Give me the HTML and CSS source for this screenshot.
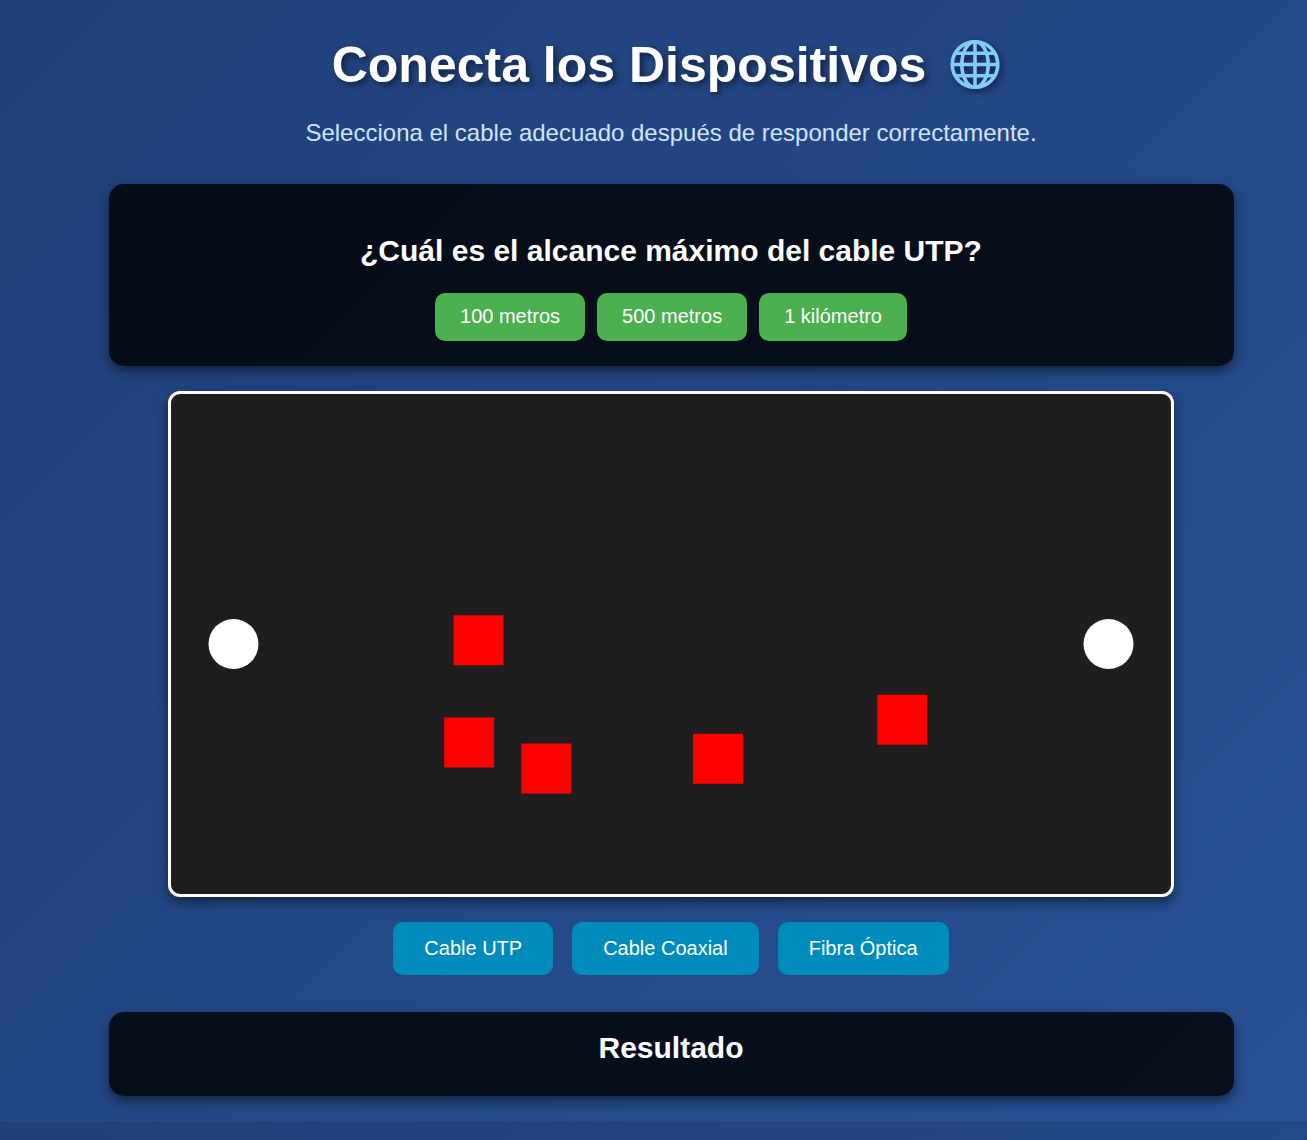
FILE: index.html
```html
<!DOCTYPE html>
<html lang="es">
<head>
<meta charset="utf-8">
<meta name="viewport" content="width=device-width, initial-scale=1">
<title>Conecta los Dispositivos</title>
<link rel="stylesheet" href="styles.css">
</head>
<body>
<main class="page">
  <header class="header">
    <h1 class="title">Conecta los Dispositivos
      <svg class="globe" viewBox="0 0 50 50" aria-hidden="true">
        <g fill="none" stroke="#83cbff" stroke-width="3.6">
          <circle cx="25" cy="24.5" r="22.8"/>
          <ellipse cx="25" cy="24.5" rx="13.2" ry="22.8"/>
          <path d="M25 2v45M2 24.5h46M5 13.3h40M5 35.7h40"/>
        </g>
      </svg>
    </h1>
    <p class="subtitle">Selecciona el cable adecuado después de responder correctamente.</p>
  </header>

  <section class="card question">
    <h2 class="heading">¿Cuál es el alcance máximo del cable UTP?</h2>
    <div class="answers">
      <button class="button answer" type="button">100 metros</button>
      <button class="button answer" type="button">500 metros</button>
      <button class="button answer" type="button">1 kilómetro</button>
    </div>
  </section>

  <svg class="board" viewBox="0 0 1000 500" role="img" aria-label="Dispositivos y obstáculos">
    <g fill="#fff">
      <circle cx="62.5" cy="250" r="25"/>
      <circle cx="937.5" cy="250" r="25"/>
    </g>
    <g fill="#f00">
      <rect x="282.5" y="221.3" width="50" height="50"/>
      <rect x="273.2" y="323.5" width="50" height="50"/>
      <rect x="350.3" y="349.5" width="50" height="50"/>
      <rect x="522" y="339.8" width="50" height="50"/>
      <rect x="706.3" y="300.7" width="50" height="50"/>
    </g>
  </svg>

  <div class="cables">
    <button class="button cable" type="button">Cable UTP</button>
    <button class="button cable" type="button">Cable Coaxial</button>
    <button class="button cable" type="button">Fibra Óptica</button>
  </div>

  <section class="card result">
    <h2 class="heading">Resultado</h2>
  </section>
</main>
</body>
</html>
```
FILE: styles.css
```css
* {
  box-sizing: border-box;
}

body {
  margin: 0;
  background: linear-gradient(135deg, #204078, #285094);
  color: #fff;
  font-family: "Liberation Sans", Arial, sans-serif;
  text-align: center;
}

.page {
  display: flex;
  flex-direction: column;
  align-items: center;
  padding: 36px 25px 25px 60px;
}

.header {
  margin-bottom: 37px;
}

.title {
  display: flex;
  align-items: center;
  justify-content: center;
  gap: 24px;
  margin: 0 0 25px;
  padding-right: 10px;
  font-size: 50px;
  line-height: 58px;
  text-shadow: 3px 3px 6px rgba(0, 0, 0, 0.5);
}

.globe {
  flex: none;
  width: 50px;
  height: 50px;
  filter: drop-shadow(3px 3px 3px rgba(0, 0, 0, 0.5));
}

.subtitle {
  margin: 0;
  color: #d1e3ff;
  font-size: 24px;
  line-height: 28px;
}

.card {
  width: 100%;
  max-width: 1125px;
  border-radius: 15px;
  background: rgba(0, 0, 0, 0.8);
  box-shadow: 0 5px 12px rgba(0, 0, 0, 0.5);
}

.question {
  margin-bottom: 25px;
  padding: 50px 25px 25px;
}

.result {
  padding: 19px 25px 31px;
}

.heading {
  margin: 0;
  font-size: 30px;
  line-height: 34px;
}

.answers,
.cables {
  display: flex;
  flex-wrap: wrap;
  justify-content: center;
}

.answers {
  gap: 12px;
  margin-top: 25px;
}

.cables {
  gap: 19px;
  margin-bottom: 37px;
}

.button {
  border: 0;
  border-radius: 10px;
  color: #fff;
  font: inherit;
  font-size: 20px;
  line-height: 23px;
  cursor: pointer;
}

.answer {
  padding: 12px 25px 13px;
  background: #4caf50;
}

.cable {
  padding: 15px 31px;
  background: #008cba;
}

.board {
  width: 100%;
  max-width: 1006px;
  height: auto;
  margin-bottom: 25px;
  border: 3px solid #fff;
  border-radius: 12px;
  background: #1e1e1e;
  box-shadow: 0 5px 12px rgba(0, 0, 0, 0.5);
}
```
